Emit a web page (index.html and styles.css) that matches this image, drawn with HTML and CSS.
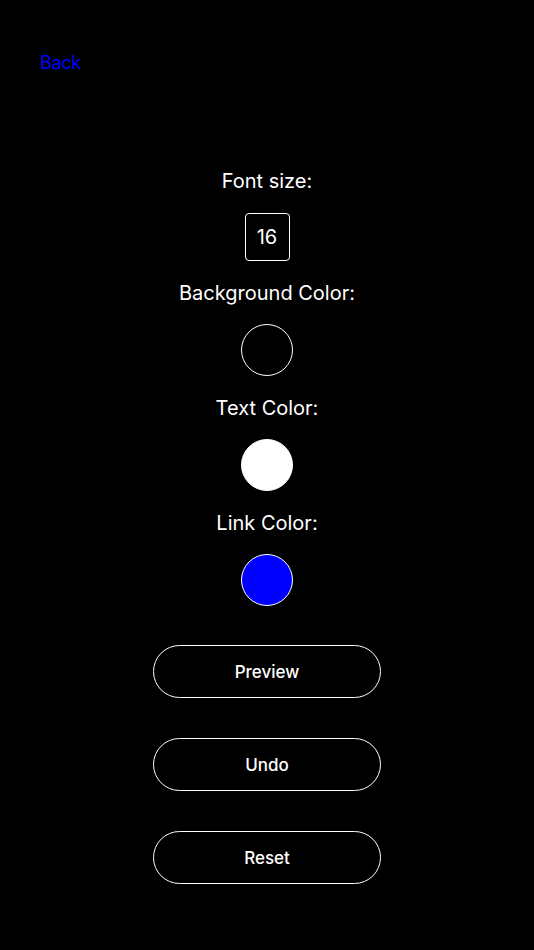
FILE: index.html
```
<!DOCTYPE html>
<html lang="en">
<head>
<meta charset="utf-8">
<title>Settings</title>
<link rel="stylesheet" href="styles.css">
</head>
<body>
<div class="page">
  <nav class="topbar"><a class="back" href="#">Back</a></nav>
  <main class="settings">
    <div class="label">Font size:</div>
    <div class="size-box">16</div>
    <div class="label">Background Color:</div>
    <div class="swatch swatch-bg"></div>
    <div class="label">Text Color:</div>
    <div class="swatch swatch-text"></div>
    <div class="label">Link Color:</div>
    <div class="swatch swatch-link"></div>
    <div class="actions">
      <button class="btn">Preview</button>
      <button class="btn">Undo</button>
      <button class="btn">Reset</button>
    </div>
  </main>
</div>
</body>
</html>
```
FILE: styles.css
```
html, body {
  margin: 0;
  padding: 0;
  background: #000;
  color: #fff;
  font-family: Inter, "Noto Sans", sans-serif;
}
.page {
  width: 534px;
  height: 950px;
  display: flex;
  flex-direction: column;
}
.topbar {
  padding: 51px 0 0 40px;
  height: 30px;
}
.back {
  color: #0000ff;
  text-decoration: none;
  font-size: 18px;
  letter-spacing: -0.3px;
  line-height: 24px;
}
.settings {
  display: flex;
  flex-direction: column;
  align-items: center;
  padding-top: 88px;
  gap: 20px;
}
.label {
  font-size: 20px;
  line-height: 24px;
}
.size-box {
  width: 43px;
  height: 46px;
  border: 1px solid #fff;
  border-radius: 4px;
  display: flex;
  align-items: center;
  justify-content: center;
  font-size: 20px;
}
.swatch {
  width: 50px;
  height: 50px;
  border: 1px solid #fff;
  border-radius: 50%;
  margin-top: -1px;
}
.swatch-bg { background: #000; }
.swatch-text { background: #fff; }
.swatch-link { background: #0000ff; }
.actions {
  display: flex;
  flex-direction: column;
  gap: 40px;
  margin-top: 19px;
}
.btn {
  width: 228px;
  height: 53px;
  border: 1px solid #fff;
  border-radius: 27px;
  background: #000;
  color: #fff;
  font-family: Inter, "Noto Sans", sans-serif;
  font-size: 17px;
  font-weight: 500;
}
```
